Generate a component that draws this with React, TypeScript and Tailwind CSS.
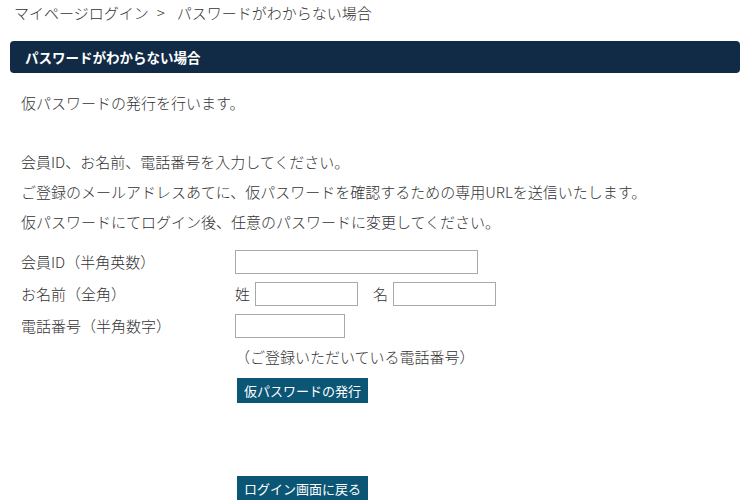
import React from 'react';

const font = "font-['Noto_Sans_CJK_JP','Noto_Sans',sans-serif]";

function Field({ label, children }: { label: string; children: React.ReactNode }) {
  return (
    <div className="flex h-[24px] items-center">
      <div className="w-[214px] shrink-0">{label}</div>
      <div className="flex items-center">{children}</div>
    </div>
  );
}

function Input({ className }: { className: string }) {
  return <input type="text" className={`h-[24px] border border-[#a9a9a9] bg-white outline-none ${className}`} />;
}

export default function App() {
  return (
    <div className={`w-[750px] h-[500px] bg-white text-[15px] font-light text-[#333] ${font}`}>
      <div className="pl-[14px] h-[25px] leading-[25px] flex">
        <span>マイページログイン</span>
        <span className="ml-[8px] mr-[12px]">&gt;</span>
        <span>パスワードがわからない場合</span>
      </div>

      <div className="mx-[10px] mt-[16px] h-[32px] rounded-[4px] bg-[#112a46] pl-[15px] flex items-center text-[13.5px] font-bold text-white">
        パスワードがわからない場合
      </div>

      <div className="pl-[21px] leading-[30px]">
        <p className="mt-[15px]">仮パスワードの発行を行います。</p>
        <div className="mt-[29px]">
          <p>会員ID、お名前、電話番号を入力してください。</p>
          <p>ご登録のメールアドレスあてに、仮パスワードを確認するための専用URLを送信いたします。</p>
          <p>仮パスワードにてログイン後、任意のパスワードに変更してください。</p>
        </div>

        <div className="mt-[13px] flex flex-col gap-[8px]">
          <Field label="会員ID（半角英数）">
            <Input className="w-[243px]" />
          </Field>
          <Field label="お名前（全角）">
            <span className="mr-[5px]">姓</span>
            <Input className="w-[103px]" />
            <span className="ml-[15px] mr-[5px]">名</span>
            <Input className="w-[103px]" />
          </Field>
          <Field label="電話番号（半角数字）">
            <Input className="w-[110px]" />
          </Field>
        </div>

        <div className="pl-[214px]">
          <p className="mt-[4px]">（ご登録いただいている電話番号）</p>
          <button className="mt-[6px] ml-[2px] h-[25px] w-[131px] bg-[#0b5575] text-white text-[13px] leading-[25px] font-normal">
            仮パスワードの発行
          </button>
          <div>
            <button className="mt-[71px] ml-[2px] h-[25px] w-[131px] bg-[#0b5575] text-white text-[13px] leading-[25px] font-normal">
              ログイン画面に戻る
            </button>
          </div>
        </div>
      </div>
    </div>
  );
}
